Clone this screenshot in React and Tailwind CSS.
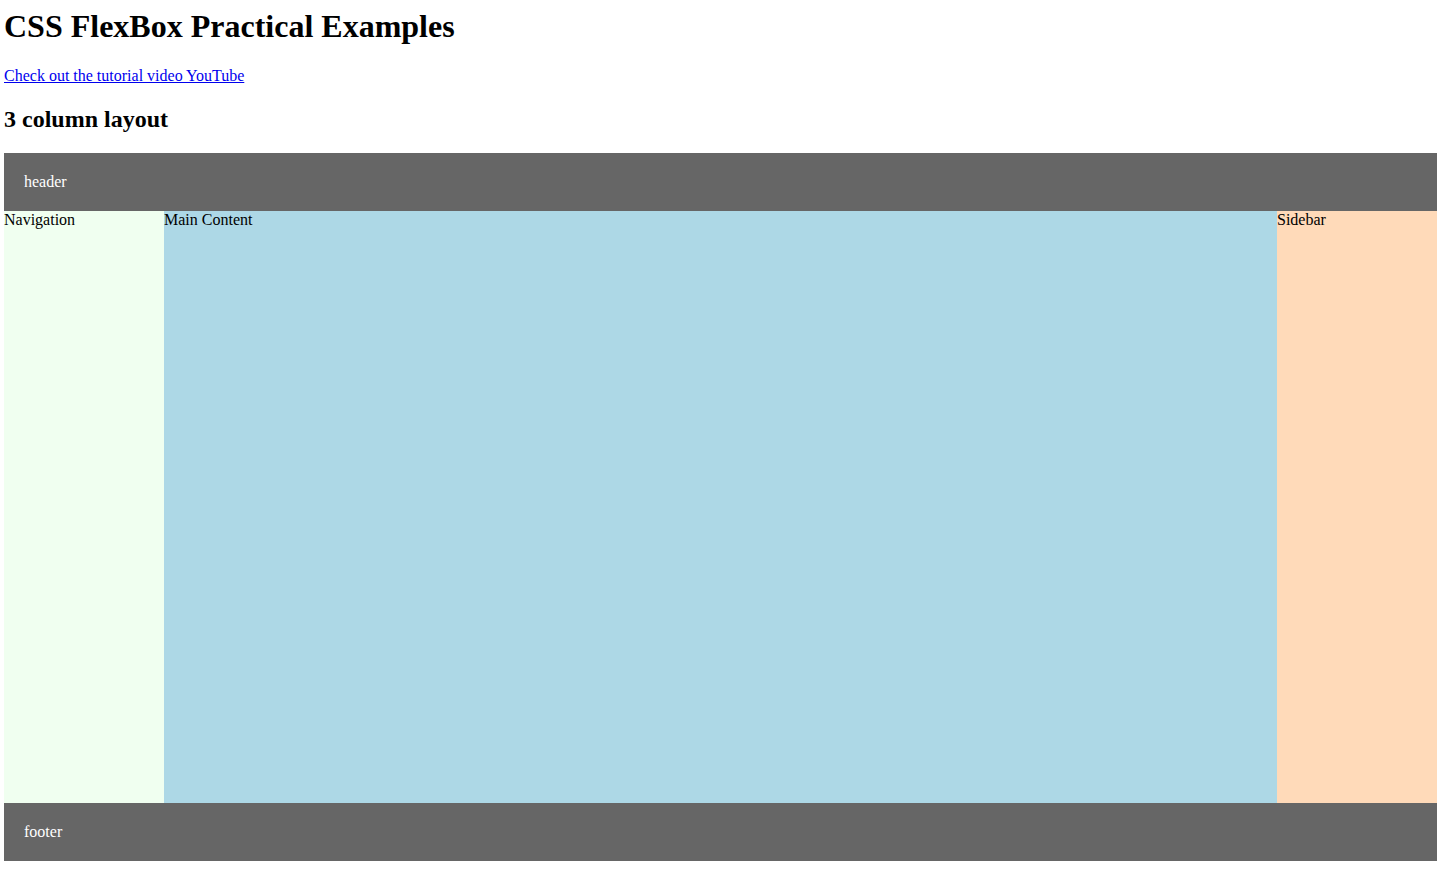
import React from 'react';

// Page: heading, link, subtitle and a holy-grail flex layout
const App = () => {
  return (
    <div className="min-h-screen bg-white pl-[4px] pr-[1px] pt-[8px] font-['Liberation_Serif',serif] text-black">
      <h1 className="text-[32px] font-bold leading-[normal]">CSS FlexBox Practical Examples</h1>

      <p className="mt-[22px] text-[16px] leading-[normal]">
        <a href="#" className="text-[#0000ee] underline">Check out the tutorial video YouTube</a>
      </p>

      <h2 className="mt-[21px] text-[24px] font-bold leading-[normal]">3 column layout</h2>

      <div className="mt-[20px] flex flex-col">
        {/* Header */}
        <header className="bg-[#666666] p-[20px] text-[16px] leading-[normal] text-white">header</header>

        {/* Columns */}
        <div className="flex h-[592px] text-[16px] leading-[normal]">
          <nav className="w-[160px] shrink-0 bg-[#f0fff0]">Navigation</nav>
          <main className="flex-1 bg-[#add8e6]">Main Content</main>
          <aside className="w-[160px] shrink-0 bg-[#ffdab9]">Sidebar</aside>
        </div>

        {/* Footer */}
        <footer className="bg-[#666666] p-[20px] text-[16px] leading-[normal] text-white">footer</footer>
      </div>
    </div>
  );
};

export default App;
